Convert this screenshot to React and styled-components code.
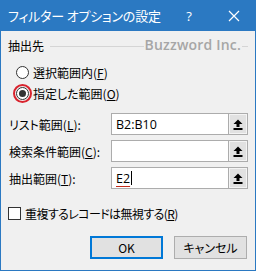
import React from 'react'
import styled, { createGlobalStyle } from 'styled-components'

const GlobalStyle = createGlobalStyle`
  html, body {
    margin: 0;
    padding: 0;
    background: #ffffff;
  }
  * { box-sizing: border-box; }
`

const UI_FONT = `"Noto Sans CJK JP", "Noto Sans", sans-serif`
const LATIN_FONT = `"Open Sans", "Noto Sans", sans-serif`

function UpArrow() {
  return (
    <svg width="10" height="11" viewBox="0 0 10 11">
      <path d="M5 0.5 L9.5 5 L6.5 5 L6.5 8 L3.5 8 L3.5 5 L0.5 5 Z" fill="#000" />
      <rect x="0.5" y="9" width="9" height="2" fill="#000" />
    </svg>
  )
}

function RefField({ label, mnemonic, suffix, value, squiggle }) {
  return (
    <FieldRow>
      <FieldLabel>
        {label}(<u>{mnemonic}</u>){suffix}
      </FieldLabel>
      <InputBox>
        {value && (
          <InputText $squiggle={squiggle}>{value}</InputText>
        )}
        {squiggle && <Caret />}
      </InputBox>
      <CollapseButton>
        <UpArrow />
      </CollapseButton>
    </FieldRow>
  )
}

export default function App() {
  return (
    <>
      <GlobalStyle />
      <Dialog>
        <TitleBar>
          <Title>フィルター オプションの設定</Title>
          <TitleButton $w={46}>?</TitleButton>
          <TitleButton $w={44}>
            <svg width="12" height="12" viewBox="0 0 12 12">
              <path d="M1 1 L11 11 M11 1 L1 11" stroke="#fff" strokeWidth="1.2" />
            </svg>
          </TitleButton>
        </TitleBar>

        <Body>
          <GroupHeader>
            <span>抽出先</span>
            <GroupLine />
            <Watermark>Buzzword Inc.</Watermark>
          </GroupHeader>

          <RadioGroup>
            <RadioRow>
              <Radio />
              <span>選択範囲内(<u>F</u>)</span>
            </RadioRow>
            <RadioRow>
              <RadioWrap>
                <Radio $checked />
                <Highlight />
              </RadioWrap>
              <span>指定した範囲(<u>O</u>)</span>
            </RadioRow>
          </RadioGroup>

          <Fields>
            <RefField label="リスト範囲" mnemonic="L" suffix=":" value="B2:B10" />
            <RefField label="検索条件範囲" mnemonic="C" suffix=":" />
            <RefField label="抽出範囲" mnemonic="T" suffix=":" value="E2" squiggle />
          </Fields>

          <CheckRow>
            <CheckBox />
            <CheckLabel>重複するレコードは無視する(<u>R</u>)</CheckLabel>
          </CheckRow>

          <ButtonRow>
            <PushButton $default>OK</PushButton>
            <PushButton>キャンセル</PushButton>
          </ButtonRow>
        </Body>
      </Dialog>
    </>
  )
}

const Dialog = styled.div`
  width: 256px;
  height: 271px;
  background: #f0f0f0;
  border: 1px solid #2b79c2;
  border-top: none;
  display: flex;
  flex-direction: column;
  font-family: ${UI_FONT};
  font-feature-settings: "palt";
  font-size: 12px;
  color: #000;
`

const TitleBar = styled.div`
  height: 31px;
  margin: 0 -1px;
  background: #2b79c2;
  display: flex;
  align-items: center;
  color: #fff;
`

const Title = styled.div`
  flex: 1;
  padding-left: 8px;
  font-size: 13px;
  letter-spacing: -0.2px;
`

const TitleButton = styled.div`
  width: ${p => p.$w}px;
  height: 31px;
  display: flex;
  align-items: center;
  justify-content: center;
  font-family: ${LATIN_FONT};
  font-size: 13px;
`

const Body = styled.div`
  flex: 1;
  padding: 7px 7px 0 7px;
  display: flex;
  flex-direction: column;
`

const GroupHeader = styled.div`
  position: relative;
  height: 16px;
  display: flex;
  align-items: center;
  line-height: 16px;
`

const GroupLine = styled.div`
  flex: 1;
  height: 1px;
  margin: 1px 0 0 6px;
  background: #d5d5d5;
`

const Watermark = styled.div`
  position: absolute;
  right: 6px;
  top: -1px;
  padding: 0 1px;
  background: #f0f0f0;
  font-family: ${LATIN_FONT};
  font-weight: 600;
  font-size: 14px;
  color: #a6a6a6;
  letter-spacing: 0.2px;
`

const RadioGroup = styled.div`
  margin-top: 8px;
  display: flex;
  flex-direction: column;
`

const RadioRow = styled.div`
  height: 21px;
  display: flex;
  align-items: center;
  gap: 4px;
  padding-left: 8px;
`

const RadioWrap = styled.div`
  position: relative;
  display: flex;
`

const Radio = styled.div`
  width: 13px;
  height: 13px;
  border: 1px solid #333;
  border-radius: 50%;
  background: #fff;
  display: flex;
  align-items: center;
  justify-content: center;
  &::after {
    content: '';
    display: ${p => (p.$checked ? 'block' : 'none')};
    width: 7px;
    height: 7px;
    border-radius: 50%;
    background: #333;
  }
`

const Highlight = styled.div`
  position: absolute;
  left: -3px;
  top: -3px;
  width: 19px;
  height: 19px;
  border: 2px solid #d9232d;
  border-radius: 50%;
`

const Fields = styled.div`
  margin-top: 9px;
  display: flex;
  flex-direction: column;
  gap: 5px;
`

const FieldRow = styled.div`
  height: 22px;
  display: flex;
  align-items: center;
`

const FieldLabel = styled.div`
  width: 103px;
  padding-left: 1px;
`

const InputBox = styled.div`
  flex: 1;
  height: 22px;
  background: #fff;
  border: 1px solid #acacac;
  border-right: none;
  display: flex;
  align-items: center;
  padding-left: 4px;
  font-family: ${LATIN_FONT};
  font-size: 12.5px;
`

const InputText = styled.span`
  text-decoration: ${p => (p.$squiggle ? 'underline' : 'none')};
  text-decoration-color: #c42b1c;
  text-decoration-thickness: 1px;
  text-underline-offset: 3px;
`

const Caret = styled.span`
  width: 1px;
  height: 14px;
  margin-left: 1px;
  background: #000;
`

const CollapseButton = styled.div`
  width: 20px;
  height: 22px;
  background: #e1e1e1;
  border: 1px solid #acacac;
  box-shadow: inset 0 0 0 1px #f4f4f4;
  display: flex;
  align-items: center;
  justify-content: center;
`

const CheckRow = styled.div`
  margin-top: 15px;
  height: 18px;
  display: flex;
  align-items: center;
  gap: 4px;
`

const CheckBox = styled.div`
  width: 13px;
  height: 13px;
  border: 1px solid #333;
  background: #fff;
`

const CheckLabel = styled.span`
  letter-spacing: -0.6px;
`

const ButtonRow = styled.div`
  margin-top: 14px;
  display: flex;
  justify-content: flex-end;
  gap: 11px;
  padding-right: 1px;
`

const PushButton = styled.div`
  width: 73px;
  height: 23px;
  background: #e1e1e1;
  border: ${p => (p.$default ? '2px solid #0078d7' : '1px solid #adadad')};
  display: flex;
  align-items: center;
  justify-content: center;
  font-size: 12px;
`
